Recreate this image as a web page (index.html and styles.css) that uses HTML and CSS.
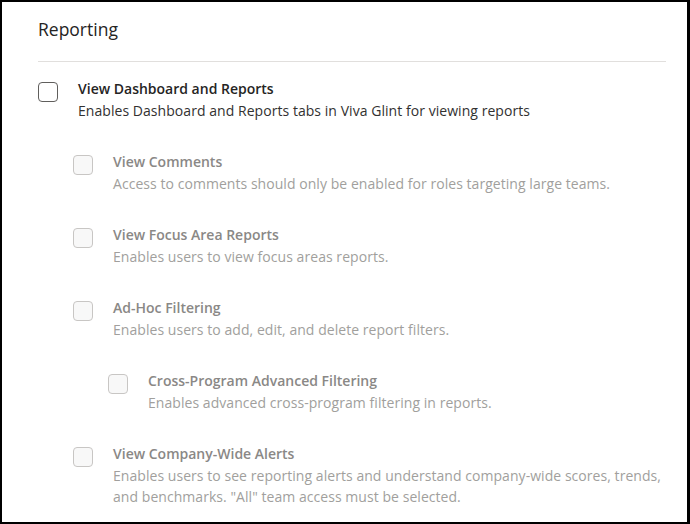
FILE: index.html
```html
<!DOCTYPE html>
<html>
<head>
<meta charset="utf-8">
<link rel="stylesheet" href="styles.css">
</head>
<body>
<div class="frame">
  <h2 class="heading">Reporting</h2>
  <div class="divider"></div>
  <div class="list">
    <div class="item">
      <span class="box"></span>
      <div class="text">
        <div class="title">View Dashboard and Reports</div>
        <div class="desc">Enables Dashboard and Reports tabs in Viva Glint for viewing reports</div>
      </div>
    </div>
    <div class="item sub disabled">
      <span class="box"></span>
      <div class="text">
        <div class="title">View Comments</div>
        <div class="desc">Access to comments should only be enabled for roles targeting large teams.</div>
      </div>
    </div>
    <div class="item sub disabled">
      <span class="box"></span>
      <div class="text">
        <div class="title">View Focus Area Reports</div>
        <div class="desc">Enables users to view focus areas reports.</div>
      </div>
    </div>
    <div class="item sub disabled">
      <span class="box"></span>
      <div class="text">
        <div class="title">Ad-Hoc Filtering</div>
        <div class="desc">Enables users to add, edit, and delete report filters.</div>
      </div>
    </div>
    <div class="item subsub disabled">
      <span class="box"></span>
      <div class="text">
        <div class="title">Cross-Program Advanced Filtering</div>
        <div class="desc">Enables advanced cross-program filtering in reports.</div>
      </div>
    </div>
    <div class="item sub disabled">
      <span class="box"></span>
      <div class="text">
        <div class="title">View Company-Wide Alerts</div>
        <div class="desc">Enables users to see reporting alerts and understand company-wide scores, trends, and benchmarks. "All" team access must be selected.</div>
      </div>
    </div>
  </div>
</div>
</body>
</html>
```

FILE: styles.css
```css
html, body {
  margin: 0;
  padding: 0;
  background: #000;
}
body {
  width: 690px;
  height: 524px;
  overflow: hidden;
  font-family: "Open Sans", "Noto Sans", sans-serif;
}
.frame {
  box-sizing: border-box;
  margin: 2px 3px 2px 2px;
  height: 520px;
  background: #fff;
  padding: 15px 21px 0 36px;
  overflow: hidden;
}
.heading {
  margin: 0;
  font-size: 17.5px;
  font-weight: 400;
  line-height: 24px;
  color: #252423;
}
.divider {
  margin-top: 20px;
  height: 1px;
  background: #e1dfdd;
}
.list {
  padding-top: 16px;
  display: flex;
  flex-direction: column;
  gap: 30px;
}
.item {
  display: flex;
  gap: 20px;
  align-items: flex-start;
}
.item.sub { padding-left: 35px; }
.item.subsub { padding-left: 70px; }
.box {
  flex: none;
  box-sizing: border-box;
  width: 20px;
  height: 20px;
  margin-top: 4px;
  border: 1.5px solid #605e5c;
  border-radius: 4px;
  background: #fff;
}
.title {
  font-size: 14px;
  line-height: 22px;
  font-weight: 600;
  color: #252423;
}
.desc {
  font-size: 14px;
  line-height: 21px;
  letter-spacing: 0.05px;
  color: #323130;
}
.disabled .box {
  border: 1px solid #c8c6c4;
  background: #f8f8f8;
}
.disabled .title { color: #8a8886; }
.disabled .desc { color: #a19f9d; }
```
